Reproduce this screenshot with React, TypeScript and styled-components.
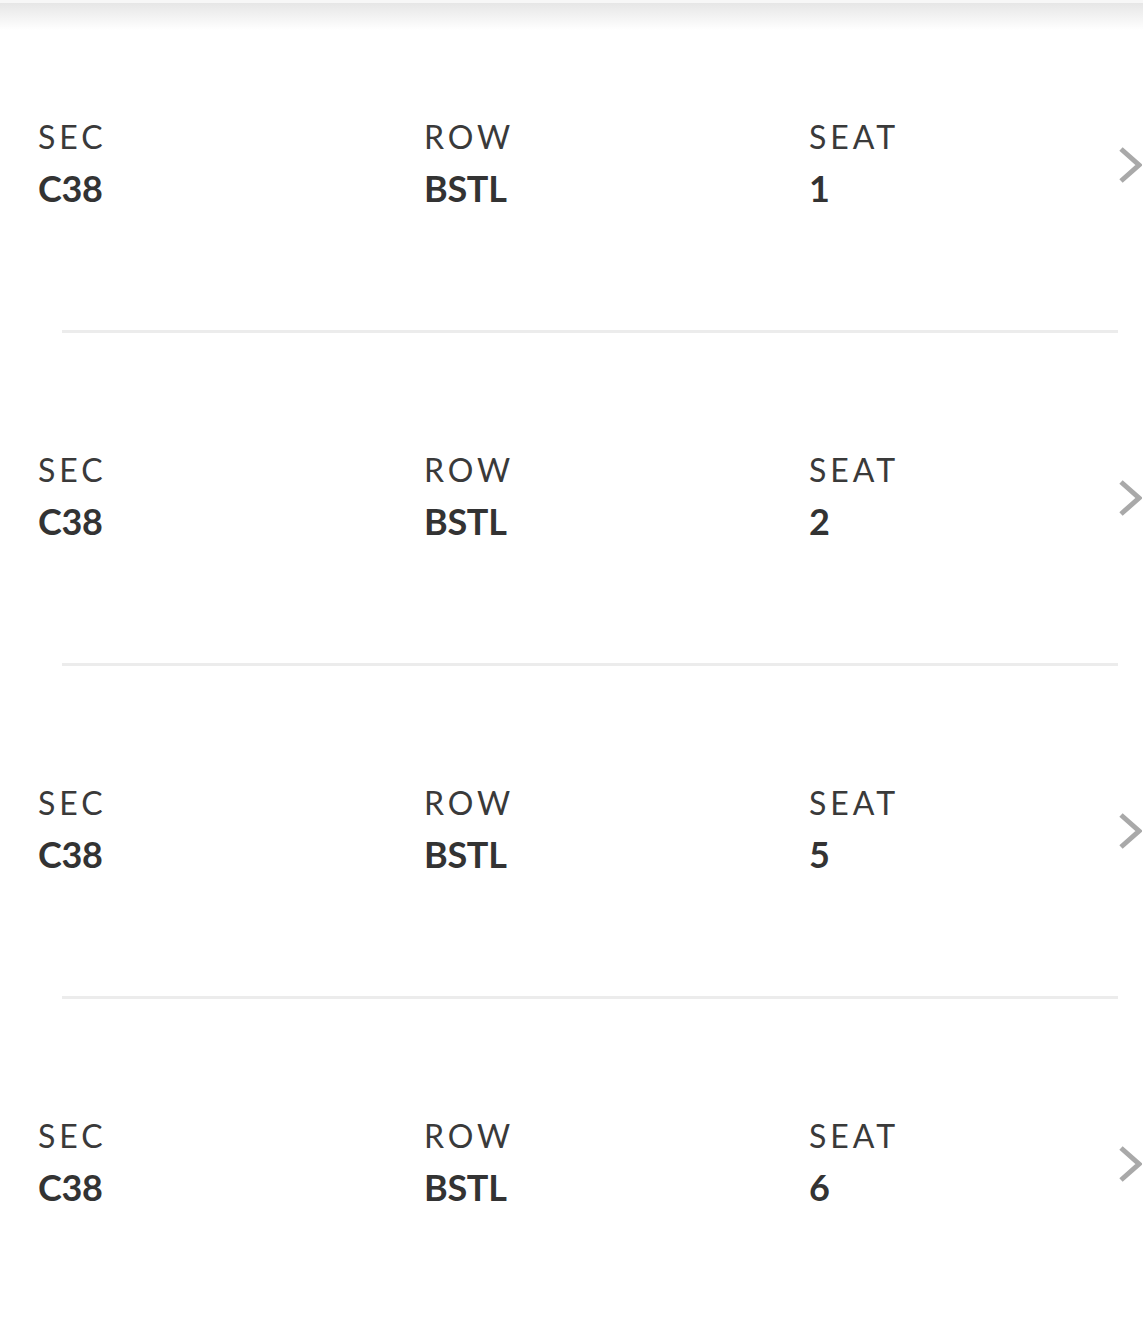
import React from 'react'
import styled, { createGlobalStyle } from 'styled-components'

const GlobalStyle = createGlobalStyle`
  html, body {
    margin: 0;
    padding: 0;
    background: #ffffff;
  }
  body {
    font-family: 'Lato', 'Noto Sans', sans-serif;
    color: #333333;
  }
`

const List = styled.div`
  width: 100%;
  min-height: 1322px;
  background: linear-gradient(to bottom, #f7f7f7 0, #f7f7f7 3px, #e6e6e6 3px, #ffffff 30px) no-repeat;
  background-size: 100% 30px;
`

const Item = styled.div`
  height: 330px;
  box-sizing: border-box;
  padding: 117px 1px 0 38px;
  display: grid;
  grid-template-columns: 386px 385px 1fr auto;
  align-content: start;
  align-items: start;
`

const Field = styled.div`
  display: flex;
  flex-direction: column;
`

const Label = styled.span`
  font-size: 32px;
  line-height: 40px;
  font-weight: 400;
  letter-spacing: 4px;
  color: #3a3a3a;
  text-transform: uppercase;
`

const Value = styled.span`
  margin-top: 9px;
  font-size: 36px;
  line-height: 44px;
  font-weight: 700;
  letter-spacing: -0.3px;
  color: #333333;
`

const Chevron = styled.svg`
  align-self: center;
  margin-top: 2px;
  width: 24px;
  height: 36px;
`

const Divider = styled.div`
  height: 3px;
  margin: 0 25px 0 62px;
  background: #ececec;
`

type Seat = { sec: string; row: string; seat: string }

const seats: Seat[] = [
  { sec: 'C38', row: 'BSTL', seat: '1' },
  { sec: 'C38', row: 'BSTL', seat: '2' },
  { sec: 'C38', row: 'BSTL', seat: '5' },
  { sec: 'C38', row: 'BSTL', seat: '6' },
]

const SeatRow: React.FC<{ seat: Seat }> = ({ seat }) => (
  <Item>
    <Field>
      <Label>Sec</Label>
      <Value>{seat.sec}</Value>
    </Field>
    <Field>
      <Label>Row</Label>
      <Value>{seat.row}</Value>
    </Field>
    <Field>
      <Label>Seat</Label>
      <Value>{seat.seat}</Value>
    </Field>
    <Chevron viewBox="0 0 24 36" fill="none">
      <polyline
        points="3,2 21,18 3,34"
        stroke="#a9a9a9"
        strokeWidth="5"
        strokeLinejoin="miter"
      />
    </Chevron>
  </Item>
)

export default function App() {
  return (
    <>
      <GlobalStyle />
      <List>
        {seats.map((s, i) => (
          <React.Fragment key={s.seat}>
            {i > 0 && <Divider />}
            <SeatRow seat={s} />
          </React.Fragment>
        ))}
      </List>
    </>
  )
}
